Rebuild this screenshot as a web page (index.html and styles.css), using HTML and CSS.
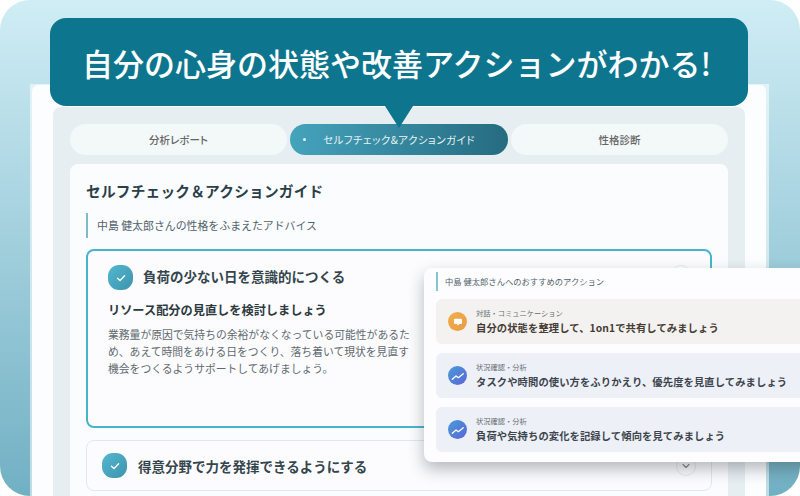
FILE: index.html
```html
<!DOCTYPE html>
<html lang="ja">
<head>
<meta charset="utf-8">
<title>セルフチェック&amp;アクションガイド</title>
<link rel="stylesheet" href="styles.css">
</head>
<body>
<div class="stage">
  <div class="window">
    <div class="window-inner">
      <div class="panel">
        <div class="tabs">
          <div class="tab">分析レポート</div>
          <div class="tab tab-active"><span class="tab-dot"></span>セルフチェック&amp;アクションガイド</div>
          <div class="tab">性格診断</div>
        </div>
        <div class="content">
          <h2 class="title">セルフチェック＆アクションガイド</h2>
          <p class="lead">中島 健太郎さんの性格をふまえたアドバイス</p>
          <section class="acc acc-open">
            <div class="acc-head">
              <span class="check"><svg width="12" height="12" viewBox="0 0 12 12"><path d="M2.5 6.300 5 8.600 9.600 3.800" fill="none" stroke="#fff" stroke-width="1.300" stroke-linecap="round" stroke-linejoin="round"/></svg></span>
              <h3 class="acc-title">負荷の少ない日を意識的につくる</h3>
            </div>
            <h4 class="acc-sub">リソース配分の見直しを検討しましょう</h4>
            <p class="acc-text">業務量が原因で気持ちの余裕がなくなっている可能性があるため、あえて時間をあける日をつくり、落ち着いて現状を見直す機会をつくるようサポートしてあげましょう。</p>
          </section>
          <section class="acc acc-closed">
            <span class="check"><svg width="12" height="12" viewBox="0 0 12 12"><path d="M2.5 6.300 5 8.600 9.600 3.800" fill="none" stroke="#fff" stroke-width="1.300" stroke-linecap="round" stroke-linejoin="round"/></svg></span>
            <h3 class="acc-title">得意分野で力を発揮できるようにする</h3>
            <span class="chev"><svg width="10" height="10" viewBox="0 0 10 10"><path d="M2 3.500 5 6.500 8 3.500" fill="none" stroke="#7b8a90" stroke-width="1.100" stroke-linecap="round" stroke-linejoin="round"/></svg></span>
          </section>
        </div>
      </div>
    </div>
  </div>

  <div class="banner">自分の心身の状態や改善アクションがわかる!</div>
  <div class="pointer"></div>
  <span class="chev chev-top"></span>

  <aside class="float">
    <p class="float-lead">中島 健太郎さんへのおすすめのアクション</p>
    <div class="action action-warm">
      <span class="ic ic-orange"><svg width="12" height="12" viewBox="0 0 12 12"><path d="M2.800 2.800h6.400a.8.800 0 0 1 .8.800v3.500a.8.800 0 0 1-.8.800H7.300L6 9.600 4.700 7.900H2.800a.8.800 0 0 1-.8-.8V3.600a.8.800 0 0 1 .8-.8z" fill="#fff"/></svg></span>
      <div class="action-body"><p class="action-cat">対話・コミュニケーション</p><p class="action-text action-text-warm">自分の状態を整理して、1on1で共有してみましょう</p></div>
    </div>
    <div class="action">
      <span class="ic ic-blue"><svg width="14" height="14" viewBox="0 0 14 14"><path d="M1.300 10.300 5 7l2.300 1.700 5-4" fill="none" stroke="#fff" stroke-width="1.300" stroke-linecap="round" stroke-linejoin="round"/></svg></span>
      <div class="action-body"><p class="action-cat">状況確認・分析</p><p class="action-text">タスクや時間の使い方をふりかえり、優先度を見直してみましょう</p></div>
    </div>
    <div class="action">
      <span class="ic ic-blue"><svg width="14" height="14" viewBox="0 0 14 14"><path d="M1.300 10.300 5 7l2.300 1.700 5-4" fill="none" stroke="#fff" stroke-width="1.300" stroke-linecap="round" stroke-linejoin="round"/></svg></span>
      <div class="action-body"><p class="action-cat">状況確認・分析</p><p class="action-text">負荷や気持ちの変化を記録して傾向を見てみましょう</p></div>
    </div>
  </aside>
</div>
</body>
</html>
```
FILE: styles.css
```css
* { box-sizing: border-box; margin: 0; padding: 0; }
html, body { width: 800px; height: 496px; overflow: hidden; background: #fff; }
body { font-family: "Noto Sans CJK JP", "Noto Sans", sans-serif; color: #2c3e46; }

.stage {
  position: relative;
  width: 800px;
  height: 496px;
  overflow: hidden;
  border-radius: 30px;
  padding: 84px 31px 0 30px;
  background: linear-gradient(180deg, #d0edf5 0%, #71b0c3 100%);
}

.window {
  height: 412px;
  padding: 1px 3px 0 2px;
  background: rgba(255, 255, 255, .55);
}
.window-inner {
  height: 411px;
  padding: 22px 21px 0 21px;
  background: #fbfdfe;
  border-radius: 6px 6px 0 0;
}
.panel {
  height: 389px;
  padding: 17px 17px 0;
  background: #e6eef1;
  border-radius: 8px 8px 0 0;
}

.tabs { display: grid; grid-template-columns: 217px 218px 217px; column-gap: 3px; }
.tab {
  display: flex; align-items: center; justify-content: center;
  height: 31px;
  border-radius: 16px;
  background: #f3f8f8;
  color: #666;
  font-size: 10.500px;
  font-weight: 500;
  font-feature-settings: "palt";
}
.tab-active {
  position: relative;
  background: linear-gradient(90deg, #45a3bc 0%, #256b80 100%);
  color: #e8f3f6;
  font-weight: 400;
  letter-spacing: 0.450px;
}
.tab-dot { position: absolute; left: 13px; top: 14px; width: 3px; height: 3px; border-radius: 50%; background: #e8f3f6; }

.content {
  margin-top: 9px;
  height: 340px;
  padding: 16px 16px 0;
  background: #fbfcfe;
  border-radius: 8px 8px 0 0;
}
.title { font-size: 14.700px; font-weight: 700; line-height: 22px; letter-spacing: 0.200px; color: #2a3f48; }
.lead {
  margin-top: 11px;
  height: 25px;
  padding-left: 9px;
  border-left: 2px solid #7cbccd;
  font-size: 10.900px;
  line-height: 25px;
  color: #51626a;
}
.acc { background: #fcfcfe; border-radius: 8px; }
.acc-open {
  margin-top: 11px;
  height: 179px;
  padding: 14px 20px 0 20px;
  border: 2px solid #48b4cc;
}
.acc-head { display: flex; align-items: center; gap: 10px; }
.acc-head .acc-title { padding-bottom: 3px; }
.check {
  flex: none;
  display: flex; align-items: center; justify-content: center;
  width: 25px; height: 25px;
  border-radius: 11px;
  background: linear-gradient(135deg, #54b7cf, #3d93ad);
}
.acc-title { font-size: 13.500px; font-weight: 700; line-height: 22px; color: #34454c; }
.acc-sub { margin-top: 10px; font-size: 12.200px; font-weight: 700; line-height: 20px; color: #2c3a40; }
.acc-text { margin-top: 6px; width: 306px; font-size: 10.800px; line-height: 17px; color: #5f6a6f; }
.acc-closed {
  position: relative;
  display: flex; align-items: center; gap: 11px;
  margin-top: 12px;
  height: 51px;
  padding: 0 15px;
  border: 1px solid #e3e7ea;
}
.chev {
  position: absolute; right: 15px; top: 15px;
  display: flex; align-items: center; justify-content: center;
  width: 20px; height: 20px;
  border-radius: 50%;
  border: 1px solid #e6e9eb;
}
.chev-top { right: 109px; top: 265px; background: #fff; }

.banner {
  position: absolute; left: 50px; top: 18px;
  width: 698px; height: 88px;
  padding-right: 5px;
  display: flex; align-items: center; justify-content: center;
  border-radius: 16px;
  background: #0d768e;
  color: #fff;
  font-size: 31px;
  font-weight: 500;
  white-space: nowrap;
}
.pointer {
  position: absolute; left: 385px; top: 106px;
  width: 28px; height: 22px;
  background: #0d768e;
  clip-path: polygon(0 0, 100% 0, 50% 100%);
}

.float {
  position: absolute; left: 424px; top: 268px;
  width: 400px; height: 194px;
  padding: 4px 12px 0 12px;
  background: #fdfdff;
  border-radius: 8px;
  box-shadow: 0 7px 16px rgba(30, 40, 50, .32);
}
.float-lead {
  height: 19px;
  padding-left: 7px;
  border-left: 2px solid #86c3d5;
  font-size: 8.300px;
  line-height: 19px;
  color: #52626a;
}
.action {
  display: flex; align-items: center; gap: 9px;
  height: 45px;
  margin-top: 9px;
  padding: 0 12px;
  border-radius: 6px;
  background: #eef0f8;
}
.float-lead + .action { margin-top: 8px; }
.action-warm { background: #f4f2f0; }
.ic {
  flex: none;
  display: flex; align-items: center; justify-content: center;
  width: 19px; height: 19px;
  border-radius: 50%;
}
.ic-orange { background: linear-gradient(135deg, #f2ae4a, #e99c45); }
.ic-blue { background: linear-gradient(135deg, #4a9bd6, #5a65d8); }
.action-cat { font-size: 7.250px; line-height: 10px; color: #666d72; }
.action-text { margin-top: 3px; font-size: 10.300px; font-weight: 700; line-height: 14px; color: #3c454c; white-space: nowrap; letter-spacing: 0.100px; }
.action-text-warm { color: #463c34; }
```
